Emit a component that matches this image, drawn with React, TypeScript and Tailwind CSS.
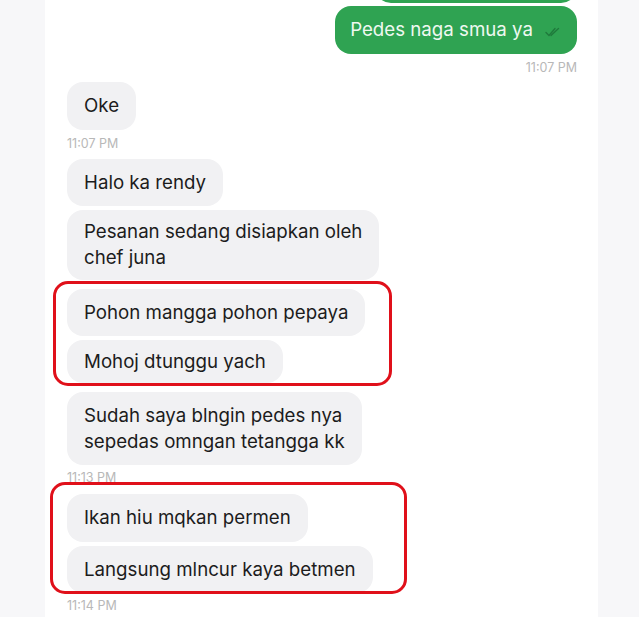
import React from "react";

const font = { fontFamily: "Inter, 'Noto Sans', sans-serif" };

function DoubleTick() {
  return (
    <svg width="16" height="10" viewBox="0 0 16 10" className="ml-3 mt-1">
      <path d="M1 5.5l3 3L10 1.5" fill="none" stroke="#1f7a3c" strokeWidth="1.4" strokeLinecap="round" strokeLinejoin="round" />
      <path d="M6 8.5L13.5 1.5" fill="none" stroke="#1f7a3c" strokeWidth="1.4" strokeLinecap="round" />
    </svg>
  );
}

function Bubble({ children, className }: { children: React.ReactNode; className: string }) {
  return (
    <div className={"shrink-0 self-start whitespace-nowrap rounded-[16px] bg-[#f1f1f3] px-[17px] text-[18.7px] leading-[26px] text-[#1c1c1c] flex flex-col justify-center " + className}>
      {children}
    </div>
  );
}

function Time({ text, className }: { text: string; className: string }) {
  return <div className={"shrink-0 text-[12.5px] leading-[14px] text-[#b8b8b8] " + className}>{text}</div>;
}

export default function App() {
  return (
    <div className="w-[639px] h-[617px] overflow-hidden bg-[#f7f7f9] flex pl-[45px]" style={font}>
      <div className="relative w-[553px] h-full bg-white flex flex-col px-[22px]">
        {/* outgoing */}
        <div className="shrink-0 self-end mr-[-1px] mt-[-44px] h-[47px] w-[202px] rounded-[16px] bg-[#2fa352]" />
        <div className="shrink-0 self-end mr-[-1px] mt-[3px] h-[48px] rounded-[16px] bg-[#2fa352] pl-[15px] pr-[16px] flex items-center text-[18.7px] text-[#eef8f0]">
          Pedes naga smua ya
          <DoubleTick />
        </div>
        <Time text="11:07 PM" className="self-end mt-[7px] mr-[-1px]" />

        {/* incoming */}
        <Bubble className="mt-[7px] h-[48px]">Oke</Bubble>
        <Time text="11:07 PM" className="mt-[7px]" />
        <Bubble className="mt-[8px] h-[47px]">Halo ka rendy</Bubble>
        <Bubble className="mt-[4px] h-[70px]">
          <span>Pesanan sedang disiapkan oleh</span>
          <span>chef juna</span>
        </Bubble>
        <Bubble className="mt-[9px] h-[47px]">Pohon mangga pohon pepaya</Bubble>
        <Bubble className="mt-[4px] h-[43px]">Mohoj dtunggu yach</Bubble>
        <Bubble className="mt-[9px] h-[73px]">
          <span>Sudah saya blngin pedes nya</span>
          <span>sepedas omngan tetangga kk</span>
        </Bubble>
        <Time text="11:13 PM" className="mt-[6px]" />
        <Bubble className="mt-[9px] h-[48px]">Ikan hiu mqkan permen</Bubble>
        <Bubble className="mt-[4px] h-[47px]">Langsung mlncur kaya betmen</Bubble>
        <Time text="11:14 PM" className="mt-[6px]" />

        {/* annotation boxes */}
        <div className="absolute left-[8px] top-[281px] w-[339px] h-[105px] rounded-[15px] border-[3px] border-[#e0101a]" />
        <div className="absolute left-[5px] top-[482px] w-[357px] h-[112px] rounded-[15px] border-[3px] border-[#e0101a]" />
      </div>
    </div>
  );
}
